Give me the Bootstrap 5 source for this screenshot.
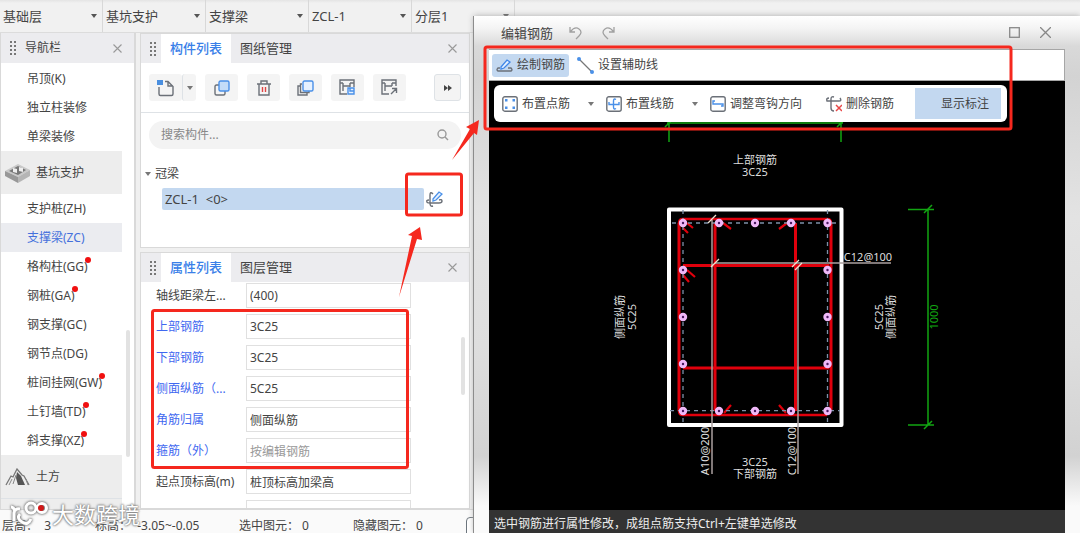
<!DOCTYPE html>
<html lang="zh-CN">
<head>
<meta charset="utf-8">
<meta name="viewport" content="width=device-width, initial-scale=1">
<title>编辑钢筋</title>
<link href="https://cdn.jsdelivr.net/npm/bootstrap@5.3.0/dist/css/bootstrap.min.css" rel="stylesheet">
<style>
body{font-family:"Noto Sans","Noto Sans CJK SC",sans-serif;font-size:12px;line-height:18px;color:#444;background:#f0f0f0}
button,input,select{font:inherit;color:inherit}
button{border:0;background:none;padding:0}
svg{display:block;flex:none}
.ln{fill:none;stroke:#6b7078;stroke-width:1.4}
.bl{stroke:#4a90e8}
.topbar{height:33px;background:linear-gradient(#e4e4e4,#f1f1f1 3px);border-bottom:1px solid #dcdcdc}
.topbar select{width:103px;height:32px;appearance:none;border:0;border-right:1px solid #d8d8d8;border-radius:0;padding:0 3px;font-size:13px;background:url("data:image/svg+xml,%3Csvg xmlns='http://www.w3.org/2000/svg' width='6' height='4'%3E%3Cpath d='M0 0h6L3 4z' fill='%23555'/%3E%3C/svg%3E") no-repeat right 5px center}
.sidenav{width:136px;background:#fff;border:solid #d9d9d9;border-width:0 2px 0 1px}
.phead{height:29px;background:#ececef;flex:none}
.sidenav .phead{height:30px}
.grip{width:8px;height:16px;background:radial-gradient(circle,#777 1px,transparent 1px) 0 0/4px 4px}
.xbtn{width:9px;height:9px}
.xbtn path{stroke:#999;stroke-width:1.1;fill:none}
.navlist{width:121px;padding-top:1px}
.navlist a{display:flex;align-items:center;height:29px;padding-left:26px;color:#444;text-decoration:none;white-space:nowrap}
.navlist a.sel{background:#ebecf0;color:#4470dc}
.navlist .grp{height:43px;padding-left:4px;gap:6px;background:#ededed;width:100%;font-size:12px}
.dotred::after{content:"";width:6px;height:6px;border-radius:50%;background:#f01010;margin:-14px 0 0 -3px}
.thumb{width:4px;background:#e2e2e2;border-radius:2px}
.panels{width:330px}
.pane{background:#fff;border:1px solid #d9d9d9}
.tabx{width:70px;height:29px;font-size:13px;line-height:29px;white-space:nowrap}
.tabx.on{background:#fff;color:#3a7fe8;font-weight:500}
.tools{height:50px;gap:9px}
.ibtn{width:33px;height:27px;border-radius:3px;background:#f4f4f4;display:flex;align-items:center;justify-content:center}
.search{height:28px;border-radius:14px;background:#f3f3f3}
.search input{border:0;background:none;outline:0;font-size:12px;min-width:0}
.search input::placeholder{color:#888;opacity:1}
.pickline{margin:5px 0 37px 21px;gap:2px}
.pickrow{width:262px;height:22px;font-size:13px;border-radius:2px;background:#c3d8f0;padding-left:3px;text-align:left}
.props{gap:6px;padding:1px 0 0 15px}
.prow{height:25px}
.prow label{width:90px;white-space:nowrap;flex:none}
.prow input{width:165px;height:25px;border:1px solid #e0e0e0;padding:0 3px;border-radius:0}
.hot{color:#3f68f0}
.prow input.dimx{color:#999}
.statusb{height:24px;background:#fafafa;border-top:1px solid #d9d9d9;padding:7px 2px 0}
.statusb span{white-space:nowrap}
.win{left:474px;right:0;top:16px;bottom:0;padding:0 15px;background:linear-gradient(#fff,#f4f4f4 12px,#d9d9d9 30px,#d3d3d3 60px,#e3e3e3 200px,#dedede 330px,#d2d2d2 440px,#fafafa 490px);box-shadow:-1px 0 0 #8c8c8c,0 0 6px #aaa}
.wtitle{height:33px;font-size:13px;padding:0 14px 0 12px}
.wtabs{height:32px;background:#fff;border:solid #a6a6a6;border-width:1px 1px 1px 0;padding:0 3px}
.wtabs button{height:23px;padding:0 4px;border-radius:3px}
.wtabs .on{background:#c3d8f0}
.board{background:#000;min-height:0}
.strip{left:5px;top:4px;height:37px;background:#fff;border-radius:6px;padding:0 6px 0 8px;width:513px;gap:12px}
.strip .pair{gap:18px}
.strip .del{margin-left:12px}
.strip .show{width:86px;height:31px;background:#c3d8f0;padding-left:14px}
.caret{width:0;height:0;border:3px solid transparent;border-top:4px solid #777;border-bottom:0}
.hint{height:23px;background:#333;color:#eee;padding:5px 5px 0;white-space:nowrap;overflow:hidden}
.cad text{font-size:11px;fill:#ddd;text-anchor:middle}
.notes{left:0;top:0;pointer-events:none;z-index:5}
.wm{left:10px;bottom:5px;color:#fff;font-size:22px;line-height:26px;z-index:6;text-shadow:0 0 2px #777,0 0 2px #888,0 0 3px #999;pointer-events:none}
.wm svg{filter:drop-shadow(0 0 1px #777) drop-shadow(0 0 1px #999)}
</style>
</head>
<body>
<div class="vh-100 d-flex flex-column position-relative overflow-hidden">
  <header class="topbar d-flex flex-shrink-0">
    <select aria-label="楼层"><option>基础层</option></select>
    <select aria-label="类别"><option>基坑支护</option></select>
    <select aria-label="构件类型"><option>支撑梁</option></select>
    <select aria-label="构件"><option>ZCL-1</option></select>
    <select aria-label="分层"><option>分层1</option></select>
  </header>

  <div class="d-flex flex-grow-1 overflow-hidden">
    <nav class="sidenav d-flex flex-column flex-shrink-0 position-relative overflow-hidden">
      <div class="phead d-flex align-items-center ps-2 pe-2">
        <span class="grip"></span><span class="ms-2 me-auto">导航栏</span>
        <button aria-label="关闭导航栏" class="me-1"><svg class="xbtn" viewBox="0 0 9 9"><path d="M.5.5l8 8m0-8l-8 8"/></svg></button>
      </div>
      <div class="navlist">
        <a href="#">吊顶(K)</a><a href="#">独立柱装修</a><a href="#">单梁装修</a>
        <button class="grp d-flex align-items-center">
          <svg width="25" height="22" viewBox="0 0 25 22"><path d="M0 9L13 2l12 6-12 7z" fill="#c9c9c9"/><path d="M0 9l13 6v6L0 14z" fill="#989898"/><path d="M25 8l-12 7v6l12-7z" fill="#b5b5b5"/><path d="M4 9l9-5 8 4-8 5z" fill="#777"/><path d="M8 6v4l4 1V7zM14 5v4l4 1V6z" fill="#eee"/></svg>基坑支护</button>
        <a href="#">支护桩(ZH)</a>
        <a href="#" class="sel">支撑梁(ZC)</a>
        <a href="#" class="dotred">格构柱(GG)</a>
        <a href="#" class="dotred">钢桩(GA)</a>
        <a href="#">钢支撑(GC)</a>
        <a href="#">钢节点(DG)</a>
        <a href="#" class="dotred">桩间挂网(GW)</a>
        <a href="#" class="dotred">土钉墙(TD)</a>
        <a href="#" class="dotred">斜支撑(XZ)</a>
        <button class="grp d-flex align-items-center">
          <svg width="25" height="18" viewBox="0 0 25 18"><path d="M1 17L6 8l2 1 4-8 5 6 2 1 5 9" fill="none" stroke="#777" stroke-width="1.3"/><path d="M12 4l4 4 4 9h-7l-2-7z" fill="#555"/><path d="M4 17l3-6M8 16l3-9M21 11l2 6" stroke="#888" fill="none"/></svg>土方</button>
        <div class="grp border-top"></div>
      </div>
      <div class="thumb position-absolute" style="right:4px;top:297px;height:127px"></div>
    </nav>

    <main class="panels d-flex flex-column flex-shrink-0 ms-1">
      <section class="pane d-flex flex-column mb-1">
        <div class="phead d-flex align-items-center ps-2">
          <span class="grip me-1"></span>
          <button class="tabx on">构件列表</button><button class="tabx">图纸管理</button>
          <button aria-label="关闭构件列表" class="ms-auto me-2 pe-1"><svg class="xbtn" viewBox="0 0 9 9"><path d="M.5.5l8 8m0-8l-8 8"/></svg></button>
        </div>
        <div class="tools d-flex align-items-center border-bottom px-2">
          <div class="d-flex">
            <button class="ibtn" aria-label="新建"><svg width="17" height="18" viewBox="0 0 17 18"><path class="ln" d="M8 2.500h3l5 5v7.500q0 1.500-1.500 1.500h-11q-1.500 0-1.500-1.500V8M11 2.500V7h5"/><path d="M0 1h6v5H0z" fill="#4a8fe0"/></svg></button>
            <button class="ibtn border-start" style="width:14px" aria-label="新建选项"><span class="caret"></span></button>
          </div>
          <button class="ibtn" aria-label="复制"><svg width="16" height="16" viewBox="0 0 16 16"><path class="ln" d="M5 5H2.500Q1 5 1 6.500v7Q1 15 2.500 15h7q1.500 0 1.500-1.500V11"/><rect x="5" y="1" width="10" height="10" rx="1.500" fill="#c3dcf8" stroke="#4a90e8" stroke-width="1.400"/></svg></button>
          <button class="ibtn" aria-label="删除"><svg width="14" height="16" viewBox="0 0 14 16"><path class="ln" d="M0 4h14M4 4V1h6v3M2 4v11h10V4"/><path d="M5.500 7v5M8.500 7v5" stroke="#e04545" stroke-width="1.400"/></svg></button>
          <button class="ibtn" aria-label="层间复制"><svg width="17" height="16" viewBox="0 0 17 16"><path class="ln" d="M3 6H1v9h9v-2M5 4H3.500v8.500H12V11"/><rect x="6" y="1" width="10" height="10" rx="1.500" fill="#e6f1ff" stroke="#4a90e8" stroke-width="1.400"/></svg></button>
          <button class="ibtn" aria-label="存档"><svg width="17" height="17" viewBox="0 0 17 17"><path class="ln" d="M8 15H1V1h14v7M4 4v8M11 4v4M4 7h7M1 4h3M11 4h4"/><path d="M9 9h6v6H9z" fill="#e6f1ff" stroke="#4a90e8" stroke-width="1.400"/><path class="ln bl" d="M11 9v3h4"/></svg></button>
          <button class="ibtn" aria-label="提取"><svg width="17" height="17" viewBox="0 0 17 17"><path class="ln" d="M8 15H1V1h14v6M4 4v8M11 4v3M4 7h7M1 4h3M11 4h4M10 15l5-5M11 9.500h4.500V14"/></svg></button>
          <button class="ibtn border ms-auto" style="width:27px" aria-label="更多"><svg width="8" height="6" viewBox="0 0 8 6"><path d="M0 0l4 3-4 3zM4 0l4 3-4 3z" fill="#444"/></svg></button>
        </div>
        <div class="search d-flex align-items-center mx-2 mt-2 px-2">
          <input class="flex-grow-1 ps-1" aria-label="搜索构件" placeholder="搜索构件...">
          <svg class="me-1" width="12" height="12" viewBox="0 0 12 12"><circle cx="5" cy="5" r="4" fill="none" stroke="#999" stroke-width="1.400"/><path d="M8 8l3 3" stroke="#999" stroke-width="1.400"/></svg>
        </div>
        <div class="d-flex align-items-center mt-3 ps-1"><span class="caret me-1"></span><span>冠梁</span></div>
        <div class="pickline d-flex align-items-center">
          <button class="pickrow">ZCL-1&nbsp; &lt;0&gt;</button>
          <button aria-label="编辑钢筋"><svg width="17" height="17" viewBox="0 0 17 17"><path class="ln" d="M7 3Q4 0 4 4v8q0 4 3 3M3 9Q0 9 1 11q0 1 3 1h9q3 0 3-2t-3-1M4 12h10"/><path d="M7 8l6-7 3 2-6 6-3 1z" fill="#e6f1ff" stroke="#4a90e8" stroke-width="1.300"/></svg></button>
        </div>
      </section>

      <section class="pane flex-grow-1 overflow-hidden position-relative">
        <div class="phead d-flex align-items-center ps-2">
          <span class="grip me-1"></span>
          <button class="tabx on">属性列表</button><button class="tabx">图层管理</button>
          <button aria-label="关闭属性列表" class="ms-auto me-2 pe-1"><svg class="xbtn" viewBox="0 0 9 9"><path d="M.5.5l8 8m0-8l-8 8"/></svg></button>
        </div>
        <form class="props d-grid">
          <div class="prow d-flex align-items-center"><label for="p1">轴线距梁左...</label><input id="p1" value="(400)"></div>
          <div class="prow d-flex align-items-center"><label for="p2" class="hot">上部钢筋</label><input id="p2" value="3C25"></div>
          <div class="prow d-flex align-items-center"><label for="p3" class="hot">下部钢筋</label><input id="p3" value="3C25"></div>
          <div class="prow d-flex align-items-center"><label for="p4" class="hot">侧面纵筋（...</label><input id="p4" value="5C25"></div>
          <div class="prow d-flex align-items-center"><label for="p5" class="hot">角筋归属</label><input id="p5" value="侧面纵筋"></div>
          <div class="prow d-flex align-items-center"><label for="p6" class="hot">箍筋（外）</label><input id="p6" class="dimx" value="按编辑钢筋"></div>
          <div class="prow d-flex align-items-center"><label for="p7">起点顶标高(m)</label><input id="p7" value="桩顶标高加梁高"></div>
          <div class="prow d-flex align-items-center"><label for="p8"></label><input id="p8" aria-label="终点顶标高"></div>
        </form>
        <div class="thumb position-absolute" style="right:4px;top:84px;height:58px"></div>
      </section>
    </main>
  </div>

  <footer class="statusb d-flex flex-shrink-0">
    <span style="width:93px">层高：&nbsp; 3</span>
    <span style="width:144px">标高：&nbsp; -3.05~-0.05</span>
    <span style="width:114px">选中图元：&nbsp;0</span>
    <span style="width:113px">隐藏图元：&nbsp;0</span>
    <button aria-label="视图" class="border border-secondary rounded-1 bg-white" style="width:20px;height:20px"></button>
  </footer>

  <section class="win position-absolute d-flex flex-column" aria-label="编辑钢筋">
    <div class="wtitle d-flex align-items-center">
      <span class="me-3">编辑钢筋</span>
      <button aria-label="撤销" class="me-3"><svg width="13" height="14" viewBox="0 0 13 14"><path d="M1 1v5h5M1.500 5.500Q6 0 10 3t0 7l-3 3" fill="none" stroke="#a0a0a0" stroke-width="1.300"/></svg></button>
      <button aria-label="重做" class="ms-1"><svg width="13" height="14" viewBox="0 0 13 14"><path d="M12 1v5H7M11.500 5.500Q7 0 3 3t0 7l3 3" fill="none" stroke="#a0a0a0" stroke-width="1.300"/></svg></button>
      <button aria-label="最大化" class="ms-auto me-3"><svg width="11" height="11" viewBox="0 0 11 11"><rect x=".7" y=".7" width="9.600" height="9.600" fill="none" stroke="#888" stroke-width="1.300"/></svg></button>
      <button aria-label="关闭" class="ms-1"><svg width="11" height="11" viewBox="0 0 11 11"><path d="M0 0l11 11M11 0L0 11" stroke="#888" stroke-width="1.300"/></svg></button>
    </div>
    <div class="wtabs d-flex align-items-center flex-shrink-0">
      <button class="on d-flex align-items-center gap-1"><svg width="17" height="15" viewBox="0 0 17 15"><path class="ln" d="M4 10H2q-2 2 0 3h13q2-1 0-3h-3"/><path d="M5 9l6-7 3 2-6 6-3 1z" fill="#e6f1ff" stroke="#3f86e8" stroke-width="1.300"/></svg>绘制钢筋</button>
      <button class="d-flex align-items-center gap-1 ms-1"><svg width="17" height="17" viewBox="0 0 17 17"><path d="M2 2l13 13" stroke="#777" stroke-width="1.200"/><circle cx="2" cy="2" r="2" fill="#4a90e8"/><circle cx="15" cy="15" r="2" fill="#4a90e8"/></svg>设置辅助线</button>
    </div>
    <div class="board flex-grow-1 position-relative">
      <svg class="cad w-100 h-100" viewBox="489 81 576 429" preserveAspectRatio="xMidYMin meet">
        <g stroke="#12a512" stroke-width="1.500" fill="none">
          <path d="M667 123H843M669 122v20M841 122v20M665 127l7-7M837 127l7-7"/>
          <path d="M928 209v216M908 209.500h26M908 425h26M924 213l8-8M924 429l8-8"/>
        </g>
        <rect x="669" y="209.500" width="172.500" height="215.500" fill="none" stroke="#fff" stroke-width="4" stroke-linejoin="round"/>
        <g stroke="#e0000c" stroke-width="3" fill="none">
          <path d="M679 223V411M831 223V411M715 223V411M795.500 223V411M683 265.500H829M683 368H829"/>
          <path stroke-width="2.500" d="M683 219H827q4 0 4 4M683 415H827M679 411q0 4 4 4M679 223q0-4 4-4"/>
          <path stroke-width="2.200" d="M683 228l5 5M687 223l6 5M719 220l12 9M791 220l-12 9M683 275l6 7M687 270l8 7M724 413l7-8M786 413l-7-8"/>
        </g>
        <path d="M683 210v214M827.500 210v214M672 223h168M670 410.700h170" stroke="#7d90a8" stroke-width="1.300" stroke-dasharray="4 4" fill="none"/>
        <path d="M712 220V474M798 267V474M715 263H891" stroke="#aaa0a0" stroke-width="1.500" fill="none"/>
        <path d="M708 223l8-8M711 267l8-8M792 267l7-7M795 270l7-7" stroke="#eee0d0" stroke-width="1.300"/>
        <g fill="#4a1a60" stroke="#efb8f8" stroke-width="3">
          <circle cx="683" cy="223" r="2.700"/><circle cx="719" cy="223" r="2.700"/><circle cx="755" cy="223" r="2.700"/><circle cx="791" cy="223" r="2.700"/><circle cx="827.500" cy="223" r="2.700"/>
          <circle cx="683" cy="270" r="2.700"/><circle cx="827.500" cy="270" r="2.700"/><circle cx="683" cy="317" r="2.700"/><circle cx="827.500" cy="317" r="2.700"/><circle cx="683" cy="364" r="2.700"/><circle cx="827.500" cy="364" r="2.700"/>
          <circle cx="683" cy="411" r="2.700"/><circle cx="719" cy="411" r="2.700"/><circle cx="755" cy="411" r="2.700"/><circle cx="791" cy="411" r="2.700"/><circle cx="827.500" cy="411" r="2.700"/>
        </g>
        <text x="755" y="164">上部钢筋</text><text x="755" y="176">3C25</text>
        <text x="755" y="466">3C25</text><text x="755" y="478">下部钢筋</text>
        <text x="868" y="261">C12@100</text>
        <text transform="translate(709 451) rotate(-90)">A10@200</text>
        <text transform="translate(796 451) rotate(-90)">C12@100</text>
        <text transform="translate(624 317) rotate(-90)">侧面纵筋</text>
        <text transform="translate(636 317) rotate(-90)">5C25</text>
        <text transform="translate(883 317) rotate(-90)">5C25</text>
        <text transform="translate(895 317) rotate(-90)">侧面纵筋</text>
        <text transform="translate(938 317) rotate(-90)" style="fill:#12a512">1000</text>
      </svg>
      <div class="strip position-absolute d-flex align-items-center">
        <div class="pair d-flex align-items-center">
          <button class="d-flex align-items-center gap-1"><svg width="16" height="16" viewBox="0 0 16 16"><rect class="ln" x=".8" y=".8" width="14.400" height="14.400" rx="2"/><path d="M3 3h2.500v2.500H3zM10.500 3H13v2.500h-2.500zM3 10.500h2.500V13H3zM10.500 10.500H13V13h-2.500z" fill="#4a90e8"/></svg>布置点筋</button>
          <span class="caret"></span>
        </div>
        <div class="pair d-flex align-items-center">
          <button class="d-flex align-items-center gap-1"><svg width="16" height="16" viewBox="0 0 16 16"><rect class="ln" x=".8" y=".8" width="14.400" height="14.400" rx="2"/><path class="ln bl" d="M10 3.500Q7.500 2 7.500 5v6q0 3 2.500 1.500M3 6v2.500h10V6"/></svg>布置线筋</button>
          <span class="caret"></span>
        </div>
        <button class="d-flex align-items-center gap-1"><svg width="16" height="16" viewBox="0 0 16 16"><rect class="ln" x=".8" y=".8" width="14.400" height="14.400" rx="2"/><path class="ln bl" d="M5 5H3v3h10v2h-2"/></svg>调整弯钩方向</button>
        <button class="del d-flex align-items-center gap-1"><svg width="16" height="16" viewBox="0 0 16 16"><path class="ln" d="M8 1Q5 0 5 3v9q0 3 3 3M3 2Q0 2 1 5h12q3 0 1-3"/><path d="M10 9l6 6M16 9l-6 6" stroke="#e84848" stroke-width="1.500"/></svg>删除钢筋</button>
        <button class="show ms-auto">显示标注</button>
      </div>
    </div>
    <div class="hint flex-shrink-0">选中钢筋进行属性修改，成组点筋支持Ctrl+左键单选修改</div>
  </section>

  <svg class="notes position-absolute" width="1080" height="533" viewBox="0 0 1080 533" aria-hidden="true">
    <g fill="none" stroke="#f5281e" stroke-width="3">
      <rect x="152.500" y="310.500" width="255" height="157" rx="2"/>
      <rect x="406.500" y="174" width="55" height="41" rx="2"/>
      <rect x="485" y="47" width="526" height="82" rx="2"/>
    </g>
    <path d="M399 297l13-61-4-1 12-8 2 13-5-1zM452 160l18-31-4-2 13-7-2 15-3-2z" fill="#f5281e"/>
  </svg>
  <div class="wm position-absolute d-flex align-items-center gap-1" aria-hidden="true">
    <svg width="38" height="28" viewBox="0 0 38 28" fill="none" stroke="#fff" stroke-width="3"><path d="M1 7q3 0 4 5M4 21V13q1-5 6-4M21 19q-3 7-9 3t-2-8"/><circle cx="21" cy="8" r="5"/><circle cx="32" cy="8" r="4.500"/><circle cx="31" cy="8" r="3" fill="#d01818" stroke="none"/></svg>
    <span>大数跨境</span>
  </div>
</div>
<script src="https://cdn.jsdelivr.net/npm/bootstrap@5.3.0/dist/js/bootstrap.bundle.min.js"></script>
</body>
</html>
